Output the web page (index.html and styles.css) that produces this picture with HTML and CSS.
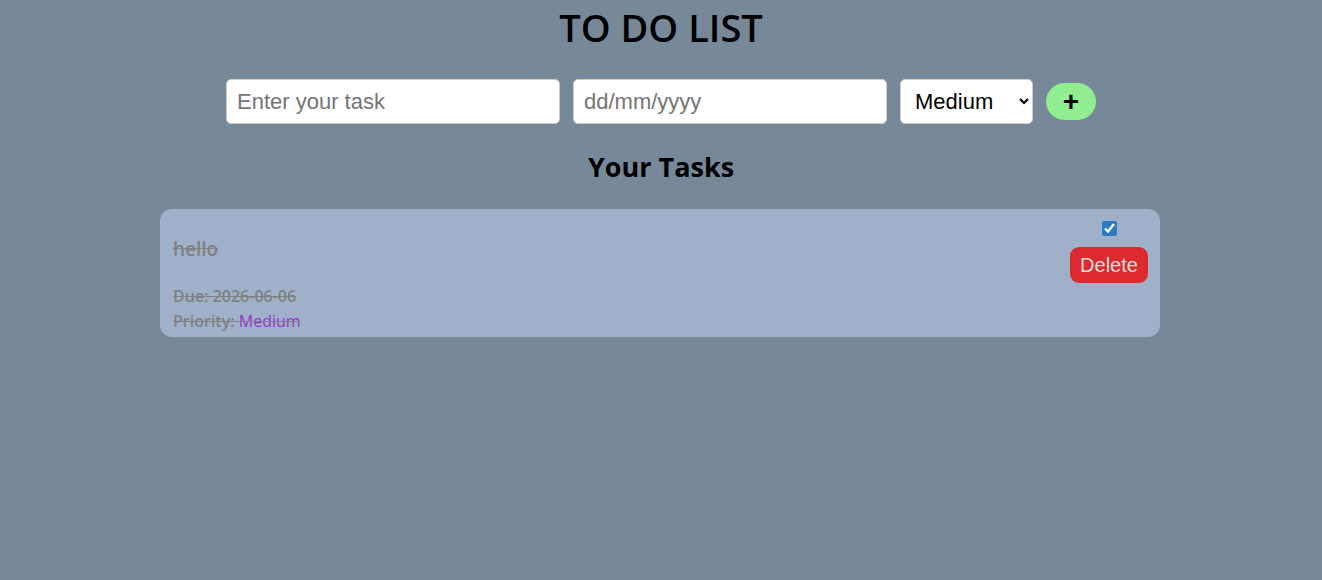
FILE: index.html
```html
<!DOCTYPE html>
<html lang="en">
<head>
    <meta charset="UTF-8">
    <meta name="viewport" content="width=device-width, initial-scale=1.0">
    <title>To Do List</title>
    <link rel="stylesheet" href="styles.css">
</head>
<body>
    <h1>TO DO LIST</h1>
    <form class="task-form">
        <input type="text" class="task-input" placeholder="Enter your task">
        <input type="text" class="date-input" placeholder="dd/mm/yyyy">
        <select class="priority-select">
            <option>Low</option>
            <option selected>Medium</option>
            <option>High</option>
        </select>
        <button type="button" class="add-btn">+</button>
    </form>

    <h2>Your Tasks</h2>
    <div class="task-list">
        <div class="task done">
            <div class="task-info">
                <h3 class="task-name">hello</h3>
                <p class="task-meta">Due: 2026-06-06</p>
                <p class="task-meta">Priority: <span class="priority">Medium</span></p>
            </div>
            <div class="task-actions">
                <input type="checkbox" checked>
                <button type="button" class="delete-btn">Delete</button>
            </div>
        </div>
    </div>
</body>
</html>
```

FILE: styles.css
```css
body {
    background-color: lightslategray;
    margin: 0;
    padding: 0;
    font-family: "Open Sans", sans-serif;
    text-align: center;
}
h1 {
    font-size: 38px;
    font-weight: 600;
    margin: 3px 0 0;
    line-height: 48px;
}
.task-form {
    display: flex;
    justify-content: center;
    align-items: center;
    gap: 13px;
    margin-top: 28px;
}
.task-form input,
.task-form select {
    font-family: "Liberation Sans", Arial, sans-serif;
    font-size: 22px;
    height: 45px;
    box-sizing: border-box;
    border: 1px solid #ccc;
    border-radius: 5px;
    padding: 0 10px;
    background: white;
}
.task-input {
    width: 334px;
}
.date-input {
    width: 314px;
}
.priority-select {
    width: 133px;
    padding: 0 6px 0 10px !important;
    color: black;
}
.add-btn {
    width: 50px;
    height: 37px;
    border: none;
    border-radius: 19px;
    background-color: lightgreen;
    font-family: "Liberation Sans", Arial, sans-serif;
    font-size: 28px;
    font-weight: bold;
    line-height: 1;
    padding: 0;
    cursor: pointer;
}
h2 {
    font-size: 27px;
    margin: 24px 0 23px;
    line-height: 38px;
}
.task-list {
    width: 1000px;
    margin: 0 auto;
    padding-right: 2px;
}
.task {
    display: flex;
    justify-content: space-between;
    background-color: #9fb1c9;
    border-radius: 12px;
    padding: 11px 12px 3px 13px;
    text-align: left;
}
.task-name {
    font-size: 19px;
    font-weight: 600;
    margin: 16px 0 22px;
    line-height: 26px;
}
.task-meta {
    font-size: 16px;
    font-weight: 600;
    margin: 0;
    line-height: 25px;
}
.done .task-name,
.done .task-meta {
    color: gray;
    text-decoration: line-through;
}
.priority {
    color: #9932cc;
    font-weight: 500;
}
.task-actions {
    display: flex;
    flex-direction: column;
    align-items: center;
    gap: 11px;
}
.task-actions input {
    width: 15px;
    height: 15px;
    margin: 1px 0 0;
    accent-color: #2b7bc4;
}
.delete-btn {
    background-color: #dc2a2e;
    color: #e8dcdc;
    border: none;
    border-radius: 9px;
    font-family: "Liberation Sans", Arial, sans-serif;
    font-size: 20px;
    padding: 0 8px;
    height: 36px;
    width: 78px;
    cursor: pointer;
}
```
